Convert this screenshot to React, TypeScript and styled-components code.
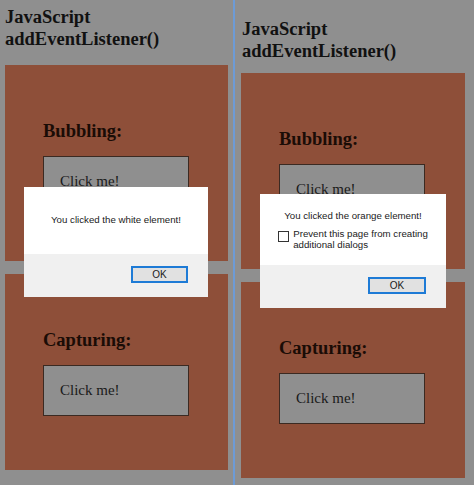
import React from "react";
import styled, { createGlobalStyle } from "styled-components";

const Global = createGlobalStyle`
  html, body { margin: 0; padding: 0; background: #8f8f8f; }
  body { width: 474px; height: 485px; overflow: hidden; }
`;

const Page = styled.div`
  display: flex;
  width: 474px;
  height: 485px;
  background: #8f8f8f;
`;

const Frame = styled.div<{ $w: number; $padTop: number; $padLeft: number }>`
  position: relative;
  width: ${(p) => p.$w}px;
  padding-top: ${(p) => p.$padTop}px;
  padding-left: ${(p) => p.$padLeft}px;
  box-sizing: border-box;
  display: flex;
  flex-direction: column;
`;

const Divider = styled.div`
  width: 2px;
  background: #6d9bd6;
`;

const Title = styled.h1<{ $indent: number }>`
  margin: 0 0 0 ${(p) => p.$indent}px;
  font-family: "Liberation Serif", "Times New Roman", serif;
  font-weight: bold;
  font-size: 18.5px;
  line-height: 22px;
  color: #111;
`;

const Sections = styled.div<{ $top: number }>`
  margin-top: ${(p) => p.$top}px;
  display: flex;
  flex-direction: column;
  gap: 13px;
`;

const Section = styled.div<{ $w: number }>`
  width: ${(p) => p.$w}px;
  height: 196px;
  box-sizing: border-box;
  background: #8e4f39;
  padding: 55px 0 0 38px;
`;

const Heading = styled.h2`
  margin: 0 0 14px;
  font-family: "Liberation Serif", "Times New Roman", serif;
  font-weight: bold;
  font-size: 18.5px;
  line-height: 22px;
  color: #1a0c06;
`;

const ClickBox = styled.div`
  width: 146px;
  height: 51px;
  box-sizing: border-box;
  background: #8f8f8f;
  border: 1px solid #3b2a22;
  padding-left: 16px;
  display: flex;
  align-items: center;
  font-family: "Liberation Serif", "Times New Roman", serif;
  font-size: 15px;
  color: #1a1a1a;
`;

const Dialog = styled.div<{ $left: number; $top: number; $w: number; $bodyH: number }>`
  position: absolute;
  left: ${(p) => p.$left}px;
  top: ${(p) => p.$top}px;
  width: ${(p) => p.$w}px;
  display: flex;
  flex-direction: column;
  font-family: "Liberation Sans", Arial, sans-serif;
  font-size: 9.7px;
  color: #1a1a1a;
  & > div:first-child { height: ${(p) => p.$bodyH}px; }
`;

const DialogBody = styled.div<{ $padTop: number }>`
  background: #ffffff;
  box-sizing: border-box;
  padding-top: ${(p) => p.$padTop}px;
  display: flex;
  flex-direction: column;
  align-items: center;
  gap: 6px;
`;

const Message = styled.div`
  line-height: 12px;
  white-space: nowrap;
`;

const CheckRow = styled.label`
  display: flex;
  align-items: flex-start;
  gap: 4px;
  line-height: 11px;
`;

const CheckBox = styled.span`
  width: 9px;
  height: 9px;
  margin-top: 3px;
  border: 1px solid #333;
  background: #fff;
  flex: none;
`;

const Footer = styled.div`
  height: 43px;
  background: #f0f0f0;
  box-sizing: border-box;
  padding: 12px 20px 0 0;
  display: flex;
  justify-content: flex-end;
  align-items: flex-start;
`;

const OkButton = styled.div<{ $w: number }>`
  width: ${(p) => p.$w}px;
  height: 17px;
  box-sizing: border-box;
  border: 2px solid #1e7bd6;
  background: #e1e1e1;
  display: flex;
  align-items: center;
  justify-content: center;
  font-size: 10px;
  color: #1a1a1a;
`;

export default function App() {
  return (
    <>
      <Global />
      <Page>
        <Frame $w={233} $padTop={6} $padLeft={5}>
          <Title $indent={0}>
            JavaScript
            <br />
            addEventListener()
          </Title>
          <Sections $top={15}>
            <Section $w={223}>
              <Heading>Bubbling:</Heading>
              <ClickBox>Click me!</ClickBox>
            </Section>
            <Section $w={223}>
              <Heading>Capturing:</Heading>
              <ClickBox>Click me!</ClickBox>
            </Section>
          </Sections>
          <Dialog $left={24} $top={187} $w={184} $bodyH={67}>
            <DialogBody $padTop={27}>
              <Message>You clicked the white element!</Message>
            </DialogBody>
            <Footer>
              <OkButton $w={57}>OK</OkButton>
            </Footer>
          </Dialog>
        </Frame>
        <Divider />
        <Frame $w={239} $padTop={18} $padLeft={6}>
          <Title $indent={1}>
            JavaScript
            <br />
            addEventListener()
          </Title>
          <Sections $top={11}>
            <Section $w={224}>
              <Heading>Bubbling:</Heading>
              <ClickBox>Click me!</ClickBox>
            </Section>
            <Section $w={224}>
              <Heading>Capturing:</Heading>
              <ClickBox>Click me!</ClickBox>
            </Section>
          </Sections>
          <Dialog $left={25} $top={194} $w={186} $bodyH={71}>
            <DialogBody $padTop={16}>
              <Message>You clicked the orange element!</Message>
              <CheckRow>
                <CheckBox />
                <span>
                  Prevent this page from creating
                  <br />
                  additional dialogs
                </span>
              </CheckRow>
            </DialogBody>
            <Footer>
              <OkButton $w={58}>OK</OkButton>
            </Footer>
          </Dialog>
        </Frame>
      </Page>
    </>
  );
}
